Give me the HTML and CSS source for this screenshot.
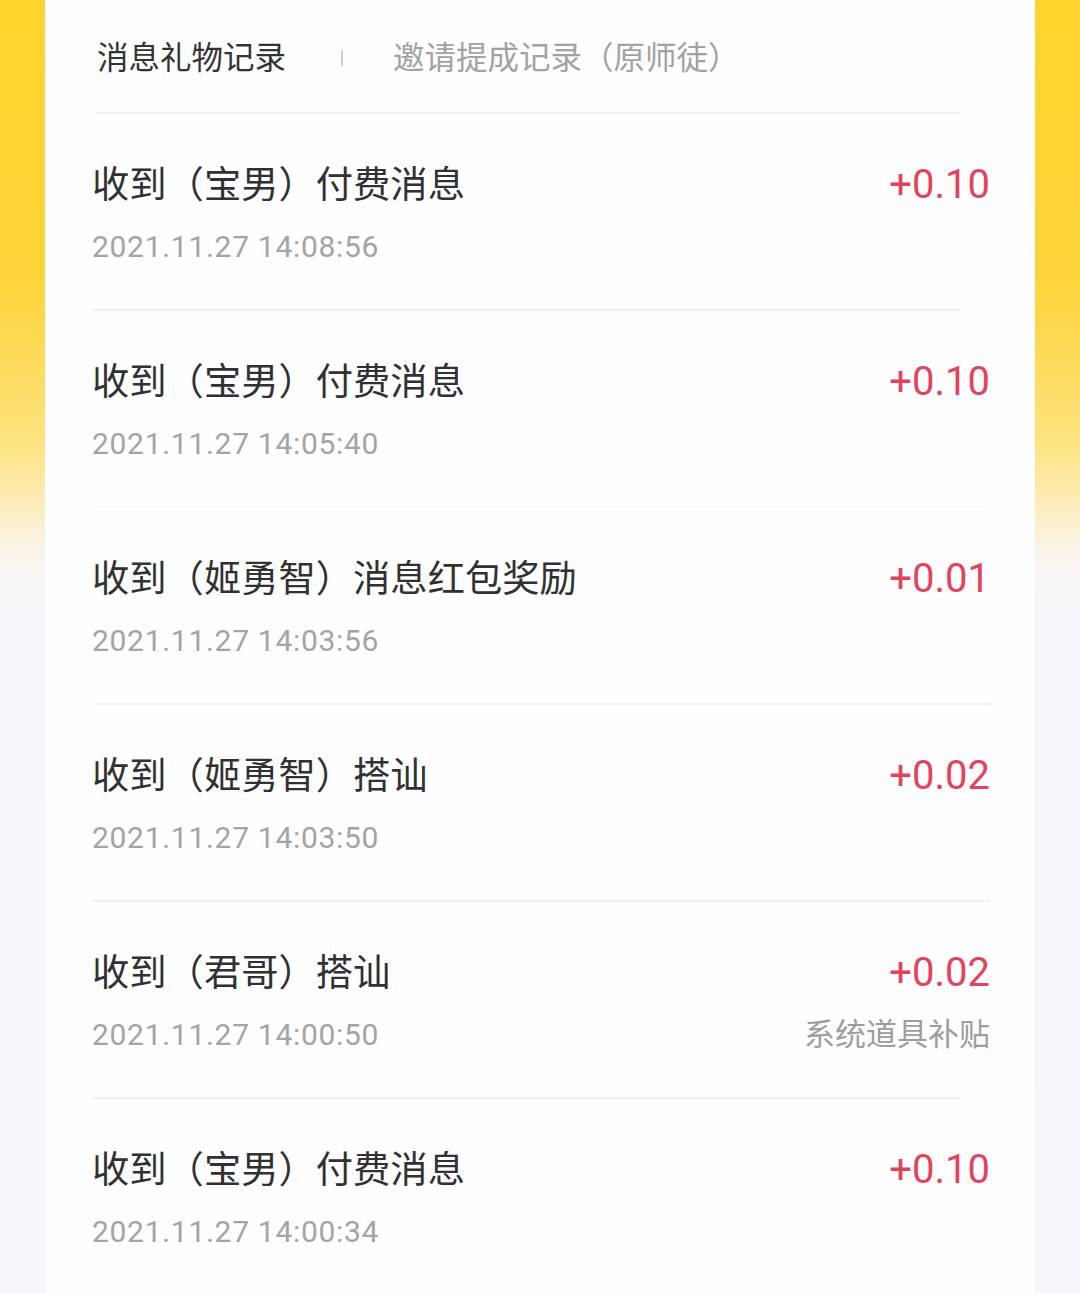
FILE: index.html
```html
<!DOCTYPE html>
<html>
<head>
  <meta charset="UTF-8">
  <title>消息礼物记录</title>
  <link rel="stylesheet" href="styles.css">
</head>
<body>
  <div class="card">
    <!-- Tabs -->
    <div class="tabs">
      <span class="tab active">消息礼物记录</span>
      <span class="tick"></span>
      <span class="tab">邀请提成记录（原师徒）</span>
    </div>

    <!-- Records -->
    <div class="record short">
      <div class="info">
        <div class="title">收到（宝男）付费消息</div>
        <div class="date">2021.11.27 14:08:56</div>
      </div>
      <div class="side">
        <div class="amount">+0.10</div>
      </div>
    </div>
    <div class="record faint">
      <div class="info">
        <div class="title">收到（宝男）付费消息</div>
        <div class="date">2021.11.27 14:05:40</div>
      </div>
      <div class="side">
        <div class="amount">+0.10</div>
      </div>
    </div>
    <div class="record">
      <div class="info">
        <div class="title">收到（姬勇智）消息红包奖励</div>
        <div class="date">2021.11.27 14:03:56</div>
      </div>
      <div class="side">
        <div class="amount">+0.01</div>
      </div>
    </div>
    <div class="record">
      <div class="info">
        <div class="title">收到（姬勇智）搭讪</div>
        <div class="date">2021.11.27 14:03:50</div>
      </div>
      <div class="side">
        <div class="amount">+0.02</div>
      </div>
    </div>
    <div class="record short">
      <div class="info">
        <div class="title">收到（君哥）搭讪</div>
        <div class="date">2021.11.27 14:00:50</div>
      </div>
      <div class="side">
        <div class="amount">+0.02</div>
        <div class="note">系统道具补贴</div>
      </div>
    </div>
    <div class="record">
      <div class="info">
        <div class="title">收到（宝男）付费消息</div>
        <div class="date">2021.11.27 14:00:34</div>
      </div>
      <div class="side">
        <div class="amount">+0.10</div>
      </div>
    </div>
  </div>
</body>
</html>
```

FILE: styles.css
```css
body { margin: 0; font-family: Roboto, "Noto Sans CJK SC", sans-serif; background: linear-gradient(to bottom, #fed42c 0, #fdd43a 280px, #fde27e 440px, #fdecb6 500px, #f9f4ea 550px, #f8f6fb 600px, #f8f6fc 100%); min-height: 1293px; overflow: hidden; }
.card { margin: 0 45px; background: #fefdff; min-height: 1293px; }
.tabs { display: flex; align-items: center; height: 112px; padding-left: 1px; margin: 0 75px 0 51px; border-bottom: 2px solid #f0eff4; }
.tab { font-size: 31.5px; color: #a2a2a2; line-height: 40px; margin-top: 5px; }
.tab.active { color: #333; }
.tick { width: 2px; height: 16px; background: #cfcfcf; margin: 4px 50px 0 55px; }
.record { display: flex; justify-content: space-between; margin: 0 45px 0 47px; padding: 49px 0 42px; border-bottom: 2px solid #f1f0f5; }
.record.short { border-image: linear-gradient(to right, #f1f0f5 0, #f1f0f5 868px, transparent 868px) 1; border-image-width: 0 0 2px 0; }
.record.faint { border-bottom-color: #f9f8fc; }
.title { font-size: 37.3px; line-height: 44px; color: #313131; }
.date { font-size: 30px; letter-spacing: 0.7px; line-height: 40px; margin-top: 20px; color: #a4a4a4; }
.side { text-align: right; }
.amount { font-size: 40px; line-height: 44px; color: #e3435a; }
.note { font-size: 31px; line-height: 40px; margin-top: 20px; color: #9d9d9d; }
```
